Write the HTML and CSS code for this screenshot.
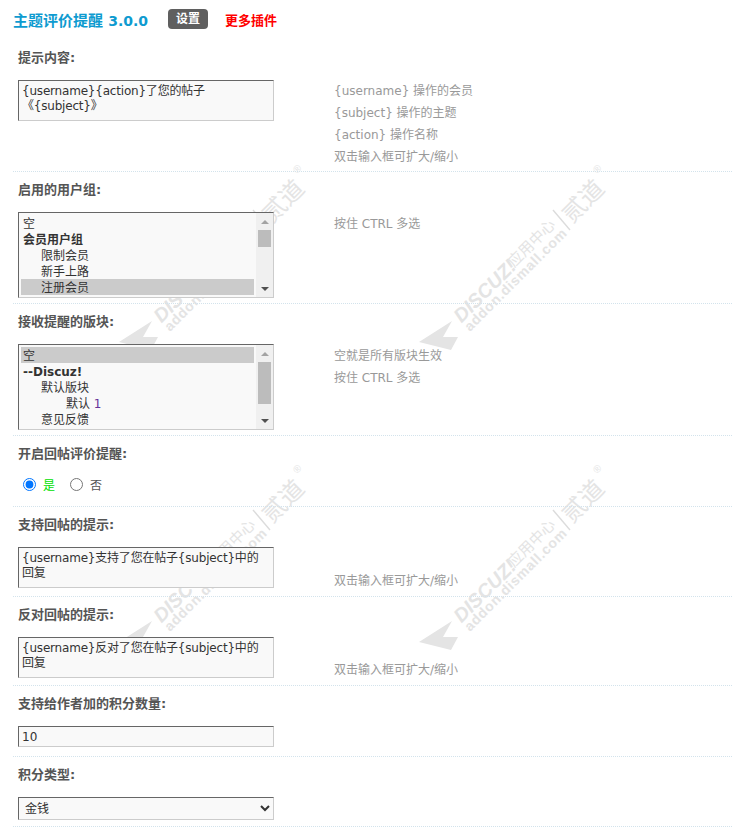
FILE: index.html
```html
<!DOCTYPE html>
<html lang="zh-CN">
<head>
<meta charset="utf-8">
<title>主题评价提醒</title>
<link rel="stylesheet" href="styles.css">
</head>
<body>
<div class="page">
  <svg class="watermarks" width="732" height="828" viewBox="0 0 732 828" aria-hidden="true">
    <defs>
      <g id="mark">
        <polygon points="4,182 37,161 28,177 43,177 36,190"/>
        <text class="wm-brand" transform="translate(46.5,163.5) rotate(-45)">DISCUZ!</text>
        <text class="wm-cn" transform="translate(99,108) rotate(-45)">应用中心</text>
        <text class="wm-url" transform="translate(55,172) rotate(-45)">addon.dismall.com</text>
        <line x1="138" y1="50" x2="155" y2="70"/>
        <text class="wm-name" transform="translate(157,64) rotate(-45)">贰道</text>
        <text class="wm-reg" transform="translate(184.5,11.5) rotate(-45)">®</text>
      </g>
    </defs>
    <use href="#mark" x="115" y="160"/>
    <use href="#mark" x="415" y="160"/>
    <use href="#mark" x="115" y="460"/>
    <use href="#mark" x="415" y="460"/>
  </svg>

  <header class="topbar">
    <h1 class="title">主题评价提醒 <span class="ver">3.0.0</span></h1>
    <a class="tab" href="#">设置</a>
    <a class="more" href="#">更多插件</a>
  </header>

  <form class="settings">
    <section class="row row-first">
      <label class="row-label">提示内容:</label>
      <div class="cols">
        <textarea class="field area" spellcheck="false">{username}{action}了您的帖子
《{subject}》</textarea>
        <div class="help">
          <p>{username} 操作的会员</p>
          <p>{subject} 操作的主题</p>
          <p>{action} 操作名称</p>
          <p>双击输入框可扩大/缩小</p>
        </div>
      </div>
    </section>

    <section class="row row-list">
      <label class="row-label">启用的用户组:</label>
      <div class="cols">
        <div class="listbox" role="listbox">
          <ul class="options">
            <li>空</li>
            <li class="group">会员用户组</li>
            <li class="lv1">限制会员</li>
            <li class="lv1">新手上路</li>
            <li class="lv1 selected">注册会员</li>
          </ul>
          <div class="scrollbar">
            <span class="arrow up"></span>
            <span class="thumb" style="height:17px"></span>
            <span class="track"></span>
            <span class="arrow down"></span>
          </div>
        </div>
        <div class="help"><p>按住 CTRL 多选</p></div>
      </div>
    </section>

    <section class="row row-list">
      <label class="row-label">接收提醒的版块:</label>
      <div class="cols">
        <div class="listbox" role="listbox">
          <ul class="options">
            <li class="selected">空</li>
            <li class="group">--Discuz!</li>
            <li class="lv1">默认版块</li>
            <li class="lv2">默认 <span class="num">1</span></li>
            <li class="lv1">意见反馈</li>
          </ul>
          <div class="scrollbar">
            <span class="arrow up"></span>
            <span class="thumb" style="height:42px"></span>
            <span class="track"></span>
            <span class="arrow down"></span>
          </div>
        </div>
        <div class="help"><p>空就是所有版块生效</p><p>按住 CTRL 多选</p></div>
      </div>
    </section>

    <section class="row row-radio">
      <label class="row-label">开启回帖评价提醒:</label>
      <div class="radios">
        <label class="radio on"><input type="radio" name="rate" checked>是</label>
        <label class="radio"><input type="radio" name="rate">否</label>
      </div>
    </section>

    <section class="row row-area">
      <label class="row-label">支持回帖的提示:</label>
      <div class="cols cols-end">
        <textarea class="field area" spellcheck="false">{username}支持了您在帖子{subject}中的回复</textarea>
        <div class="help"><p>双击输入框可扩大/缩小</p></div>
      </div>
    </section>

    <section class="row row-area row-area-tight">
      <label class="row-label">反对回帖的提示:</label>
      <div class="cols cols-end">
        <textarea class="field area" spellcheck="false">{username}反对了您在帖子{subject}中的回复</textarea>
        <div class="help"><p>双击输入框可扩大/缩小</p></div>
      </div>
    </section>

    <section class="row row-input">
      <label class="row-label">支持给作者加的积分数量:</label>
      <input class="field line" type="text" value="10">
    </section>

    <section class="row row-select">
      <label class="row-label">积分类型:</label>
      <select class="field pick"><option>金钱</option></select>
    </section>
  </form>
</div>
</body>
</html>
```
FILE: styles.css
```css
* { box-sizing: border-box; }
html, body { margin: 0; padding: 0; background: #fff; }
body {
  font-family: "DejaVu Sans", "Noto Sans CJK SC", sans-serif;
  font-size: 12px;
  color: #555;
  overflow: hidden;
}
.page { position: relative; width: 732px; height: 828px; overflow: hidden; }

.watermarks { position: absolute; left: 0; top: 0; z-index: 0; }
.watermarks polygon { fill: #e4e4e4; }
.watermarks line { stroke: #dcdcdc; stroke-width: 1.4; }
.watermarks text { fill: #e4e4e4; font-family: "Liberation Sans", "Noto Sans CJK SC", sans-serif; }
.wm-brand { font-size: 19.5px; font-weight: 700; font-style: italic; }
.wm-cn { font-size: 15px; }
.wm-url { font-size: 14px; font-weight: 700; letter-spacing: 0.7px; }
.wm-name { font-size: 24px; }
.wm-reg { font-size: 10px; text-anchor: middle; }

.topbar {
  position: relative;
  z-index: 1;
  display: flex;
  align-items: center;
  height: 40px;
  padding: 0 0 2px 13px;
}
.title {
  margin: 0;
  width: 155px;
  font: 700 15px "DejaVu Sans", "Noto Sans CJK SC", sans-serif;
  color: #0e9bd0;
  white-space: nowrap;
}
.ver { font-size: 14px; }
.tab {
  width: 40px;
  height: 20px;
  line-height: 20px;
  text-align: center;
  border-radius: 4px;
  background: #5f5f5f;
  color: #fff;
  font-size: 12px;
  font-weight: 700;
  text-decoration: none;
}
.more {
  margin-left: 17px;
  color: #f00;
  font-size: 13px;
  font-weight: 700;
  text-decoration: none;
}

.settings { position: relative; z-index: 1; margin-left: 13px; }
.row {
  padding: 0 0 5px 5px;
  border-bottom: 1px dotted #d3e3ec;
}
.row-label {
  display: block;
  height: 40px;
  padding-top: 10px;
  line-height: 16px;
  font-size: 13px;
  font-weight: 700;
  color: #555;
}
.cols { display: flex; }
.cols-end { align-items: flex-end; }

.field {
  display: block;
  width: 256px;
  margin: 0;
  background: #f9f9f9;
  border: 1px solid #ccc;
  border-top-color: #666;
  border-left-color: #666;
  border-radius: 0;
  outline: none;
  font: inherit;
  color: #333;
}
.area {
  flex: none;
  height: 41px;
  padding: 3px 3px 0;
  line-height: 15px;
  letter-spacing: -0.2px;
  overflow: hidden;
  resize: none;
}
.line { height: 21px; padding: 0 3px; }
.pick { height: 23px; padding: 0 2px; }

.help { margin-left: 60px; color: #999; }
.help p { margin: 0; line-height: 22px; }
.row-first { padding-bottom: 3px; }
.row-list .help { margin-top: 1px; }
.row-area { padding-bottom: 8px; }
.row-area-tight { padding-bottom: 7px; }
.row-area .help { margin-bottom: -4px; }
.row-area-tight .help { margin-bottom: -3px; }
.row-input { padding-bottom: 9px; }
.row-select { padding-bottom: 6px; }

.row-radio { padding-bottom: 14px; }
.radios { display: flex; gap: 15px; padding-left: 5px; height: 16px; align-items: center; }
.radio { display: flex; align-items: center; gap: 7px; color: #555; }
.radio.on { color: #00e000; }
.radio input { margin: 0; width: 13px; height: 13px; }

.listbox {
  flex: none;
  display: flex;
  width: 256px;
  height: 86px;
  background: #f9f9f9;
  border: 1px solid #ccc;
  border-top-color: #666;
  border-left-color: #666;
  color: #333;
}
.options {
  flex: 1;
  margin: 0;
  padding: 2px 0 0 2px;
  list-style: none;
  overflow: hidden;
}
.options li { height: 16px; line-height: 18px; padding-left: 2px; white-space: nowrap; }
.options .lv1 { padding-left: 20px; }
.options .lv2 { padding-left: 45px; }
.options .group { font-weight: 700; }
.options .selected { background: #cbcbcb; }
.num { color: #639; }

.scrollbar {
  flex: none;
  display: flex;
  flex-direction: column;
  width: 17px;
  margin-left: 2px;
  background: #f0f0f0;
}
.arrow { flex: none; height: 17px; display: flex; align-items: center; justify-content: center; }
.arrow::before { content: ""; border-left: 4px solid transparent; border-right: 4px solid transparent; }
.arrow.up::before { border-bottom: 4px solid #a3a3a3; }
.arrow.down::before { border-top: 4px solid #505050; }
.thumb { flex: none; margin: 0 2px; background: #bcbcbc; }
.track { flex: 1; }
```
